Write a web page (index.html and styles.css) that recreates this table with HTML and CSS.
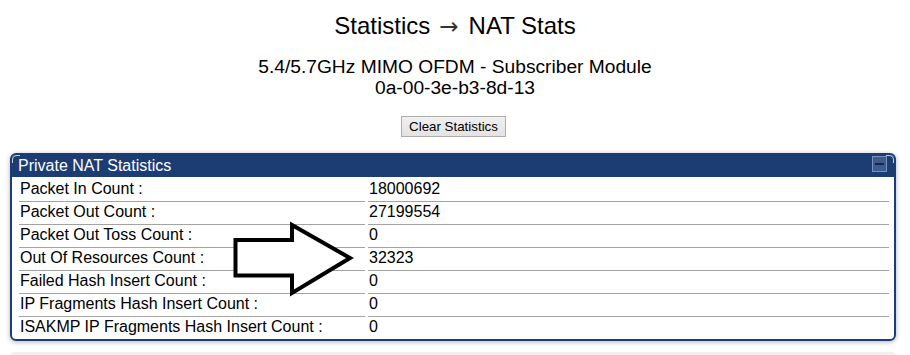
FILE: index.html
```html
<!DOCTYPE html>
<html>
<head>
<meta charset="utf-8">
<title>NAT Stats</title>
<link rel="stylesheet" href="styles.css">
</head>
<body>
<h1 class="title">Statistics<span class="arrow">→</span>NAT Stats</h1>
<div class="subtitle">5.4/5.7GHz MIMO OFDM - Subscriber Module<br>0a-00-3e-b3-8d-13</div>
<div class="actions"><button class="btn" type="button">Clear Statistics</button></div>
<div class="panel">
  <div class="panel-head">
    <span class="panel-title">Private NAT Statistics</span>
    <span class="minimize"><span class="minus"></span></span>
  </div>
  <div class="panel-body">
    <div class="label">Packet In Count :</div><div class="value">18000692</div>
    <div class="label">Packet Out Count :</div><div class="value">27199554</div>
    <div class="label">Packet Out Toss Count :</div><div class="value">0</div>
    <div class="label">Out Of Resources Count :</div><div class="value">32323</div>
    <div class="label">Failed Hash Insert Count :</div><div class="value">0</div>
    <div class="label">IP Fragments Hash Insert Count :</div><div class="value">0</div>
    <div class="label last">ISAKMP IP Fragments Hash Insert Count :</div><div class="value last">0</div>
  </div>
</div>
<div class="next-edge"></div>
<svg class="callout" width="130" height="84" viewBox="0 0 130 84" xmlns="http://www.w3.org/2000/svg">
  <polygon points="5.5,22 62,22 62,7 120,40 62,75 62,57.5 5.5,57.5" fill="#fff" stroke="#000" stroke-width="4" stroke-linejoin="miter" stroke-miterlimit="10"/>
</svg>
</body>
</html>
```
FILE: styles.css
```css
html, body {
  margin: 0;
  padding: 0;
  background: #fff;
}
body {
  position: relative;
  font-family: "Liberation Sans", Arial, sans-serif;
  color: #000;
  width: 910px;
  height: 355px;
  overflow: hidden;
}
.title {
  margin: 12px 0 0;
  height: 28px;
  font-size: 24px;
  line-height: 28px;
  font-weight: normal;
  text-align: center;
}
.arrow {
  display: inline-block;
  margin: 0 10px 0 9px;
  font-family: "DejaVu Sans", sans-serif;
  font-size: 23px;
  line-height: 20px;
  color: #333;
}
.subtitle {
  margin-top: 16px;
  font-size: 19.2px;
  line-height: 21px;
  text-align: center;
}
.actions {
  margin-top: 18px;
  display: flex;
  justify-content: center;
}
.btn {
  box-sizing: border-box;
  width: 105px;
  height: 21px;
  margin-right: 3px;
  padding: 0;
  font-family: "Liberation Sans", Arial, sans-serif;
  font-size: 13.33px;
  line-height: 19px;
  background: linear-gradient(#f0f0f0, #e3e3e3);
  border: 1px solid #adadad;
  border-radius: 0;
  color: #000;
}
.panel {
  position: relative;
  margin: 16px 14px 0 10px;
  border: 2px solid #1c3c74;
  border-radius: 6px;
  overflow: hidden;
  box-shadow: 0 1px 5px rgba(0, 0, 0, 0.3);
}
.panel::before,
.panel::after {
  content: "";
  position: absolute;
  top: 0;
  width: 7px;
  height: 7px;
  border-top: 1px solid rgba(255, 255, 255, 0.75);
}
.panel::before {
  left: 0;
  border-left: 1px solid rgba(255, 255, 255, 0.75);
  border-top-left-radius: 5px;
}
.panel::after {
  right: 0;
  border-right: 1px solid rgba(255, 255, 255, 0.75);
  border-top-right-radius: 5px;
}
.panel-head {
  display: flex;
  justify-content: space-between;
  align-items: flex-start;
  height: 22px;
  padding: 0 7px 0 6px;
  background: #1c3c74;
  color: #fff;
}
.panel-title {
  font-size: 16px;
  line-height: 22px;
}
.minimize {
  display: flex;
  align-items: center;
  justify-content: center;
  box-sizing: border-box;
  width: 15px;
  height: 16px;
  margin-top: 1px;
  background: #3e5b90;
  border: 1px solid #7890bb;
}
.minus {
  display: block;
  width: 9px;
  height: 2px;
  background: #13254d;
}
.panel-body {
  display: grid;
  grid-template-columns: 346px 1fr;
  column-gap: 3px;
  padding: 2px 5px 0 7px;
  font-size: 16px;
}
.label,
.value {
  line-height: 19px;
  height: 19px;
  padding: 0 0 3px 1px;
  border-bottom: 1px solid #a3a3a3;
  white-space: nowrap;
}
.label.last,
.value.last {
  border-bottom: 0;
}
.next-edge {
  margin: 11px 14px 0 10px;
  height: 4px;
  background: #f1f1f1;
  border-radius: 4px 4px 0 0;
}
.callout {
  position: absolute;
  left: 230px;
  top: 218px;
  pointer-events: none;
}
```
